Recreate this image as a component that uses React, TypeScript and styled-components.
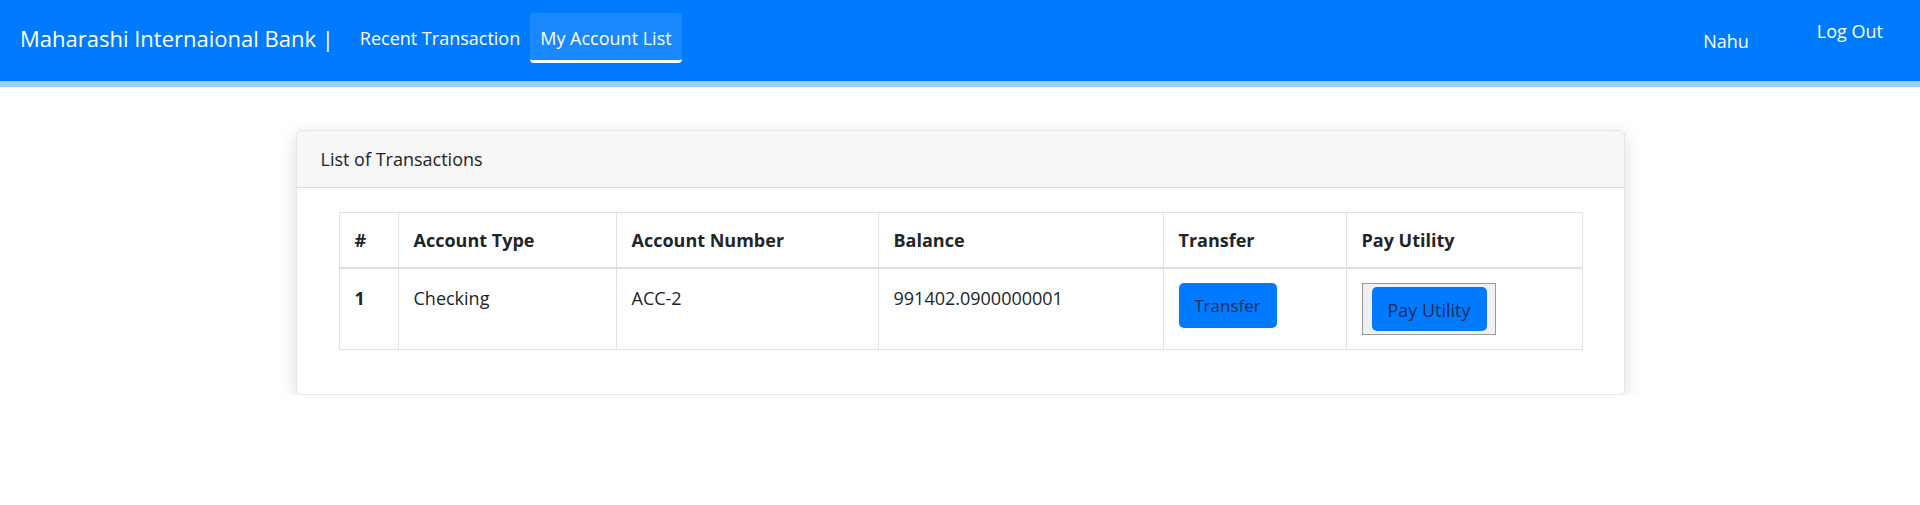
import React from "react";
import styled, { createGlobalStyle } from "styled-components";

const GlobalStyle = createGlobalStyle`
  body {
    margin: 0;
    background: #fff;
    font-family: "Open Sans", "Noto Sans", sans-serif;
    color: #212529;
  }
`;

const NavBar = styled.nav`
  height: 87px;
  box-sizing: border-box;
  background-color: #007bff;
  border-bottom: 6px solid #9dd0f8;
  display: flex;
  align-items: center;
  padding: 0 37px 5px 20px;
`;

const Brand = styled.div`
  font-size: 22px;
  color: #fff;
  margin-right: 16px;
  white-space: nowrap;
`;

const NavLink = styled.a<{ $active?: boolean }>`
  font-size: 18px;
  color: #fff;
  text-decoration: none;
  padding: 3px 10px 0;
  height: 50px;
  display: flex;
  align-items: center;
  box-sizing: border-box;
  border-radius: 4px;
  white-space: nowrap;
  background-color: ${(p) => (p.$active ? "#1a88ff" : "transparent")};
  border-bottom: 3px solid ${(p) => (p.$active ? "#fff" : "transparent")};
`;

const RightNav = styled.div`
  margin-left: auto;
  display: flex;
  align-items: center;
  gap: 68px;
  padding-top: 5px;
`;

const UserItem = styled.span<{ $raised?: boolean }>`
  font-size: 18px;
  color: #fff;
  margin-bottom: ${(p) => (p.$raised ? "20px" : "0")};
`;

const Main = styled.main`
  padding-top: 43px;
`;

const Card = styled.div`
  width: 1329px;
  margin: 0 auto;
  box-sizing: border-box;
  border: 1px solid rgba(0, 0, 0, 0.1);
  border-radius: 5px;
  box-shadow: 0 4px 18px rgba(0, 0, 0, 0.14);
  overflow: hidden;
`;

const CardHeader = styled.div`
  height: 56px;
  background-color: #f7f7f7;
  border-bottom: 1px solid #dcdcdc;
  display: flex;
  align-items: center;
  padding: 0 24px;
  font-size: 18px;
  color: #212529;
`;

const CardBody = styled.div`
  padding: 24px 42px 25px;
`;

const Table = styled.table`
  width: 100%;
  table-layout: fixed;
  border-collapse: collapse;
  margin-bottom: 19px;
  font-size: 18px;
  color: #212529;
`;

const HeadCell = styled.th<{ $w: number }>`
  width: ${(p) => p.$w}px;
  box-sizing: border-box;
  text-align: left;
  font-weight: 700;
  padding: 15px 15px;
  height: 26px;
  border: 1px solid #dee2e6;
  border-bottom: 2px solid #dee2e6;
`;

const Cell = styled.td<{ $bold?: boolean }>`
  vertical-align: top;
  padding: 14px 15px;
  line-height: 25px;
  border: 1px solid #dee2e6;
  font-weight: ${(p) => (p.$bold ? 700 : 400)};
`;

const CellText = styled.div`
  padding-top: 3px;
`;

const BlueButton = styled.span<{ $size?: number }>`
  display: inline-flex;
  align-items: center;
  justify-content: center;
  background-color: #007bff;
  color: #1b2c52;
  border-radius: 5px;
  font-size: ${(p) => p.$size || 17}px;
  white-space: nowrap;
  box-sizing: border-box;
`;

const TransferButton = styled(BlueButton)`
  width: 98px;
  height: 45px;
`;

const NativeButton = styled.button`
  display: inline-flex;
  padding: 3px 8px 3px 9px;
  background-color: #f0f0f0;
  border: 1px solid #9a9a9a;
  border-radius: 0;
  font-family: inherit;
  cursor: pointer;
`;

const PayButton = styled(BlueButton)`
  width: 115px;
  height: 44px;
  padding-top: 2px;
`;

const columns = [
  { label: "#", w: 59 },
  { label: "Account Type", w: 218 },
  { label: "Account Number", w: 262 },
  { label: "Balance", w: 285 },
  { label: "Transfer", w: 183 },
  { label: "Pay Utility", w: 236 },
];

const accounts = [
  { id: 1, type: "Checking", number: "ACC-2", balance: "991402.0900000001" },
];

const App: React.FC = () => {
  return (
    <>
      <GlobalStyle />
      <NavBar>
        <Brand>Maharashi Internaional Bank |</Brand>
        <NavLink>Recent Transaction</NavLink>
        <NavLink $active>My Account List</NavLink>
        <RightNav>
          <UserItem>Nahu</UserItem>
          <UserItem $raised>Log Out</UserItem>
        </RightNav>
      </NavBar>
      <Main>
        <Card>
          <CardHeader>List of Transactions</CardHeader>
          <CardBody>
            <Table>
              <thead>
                <tr>
                  {columns.map((c) => (
                    <HeadCell key={c.label} $w={c.w}>
                      {c.label}
                    </HeadCell>
                  ))}
                </tr>
              </thead>
              <tbody>
                {accounts.map((a) => (
                  <tr key={a.id}>
                    <Cell $bold>
                      <CellText>{a.id}</CellText>
                    </Cell>
                    <Cell>
                      <CellText>{a.type}</CellText>
                    </Cell>
                    <Cell>
                      <CellText>{a.number}</CellText>
                    </Cell>
                    <Cell>
                      <CellText>{a.balance}</CellText>
                    </Cell>
                    <Cell>
                      <TransferButton>Transfer</TransferButton>
                    </Cell>
                    <Cell>
                      <NativeButton>
                        <PayButton $size={18}>Pay Utility</PayButton>
                      </NativeButton>
                    </Cell>
                  </tr>
                ))}
              </tbody>
            </Table>
          </CardBody>
        </Card>
      </Main>
    </>
  );
};

export default App;
